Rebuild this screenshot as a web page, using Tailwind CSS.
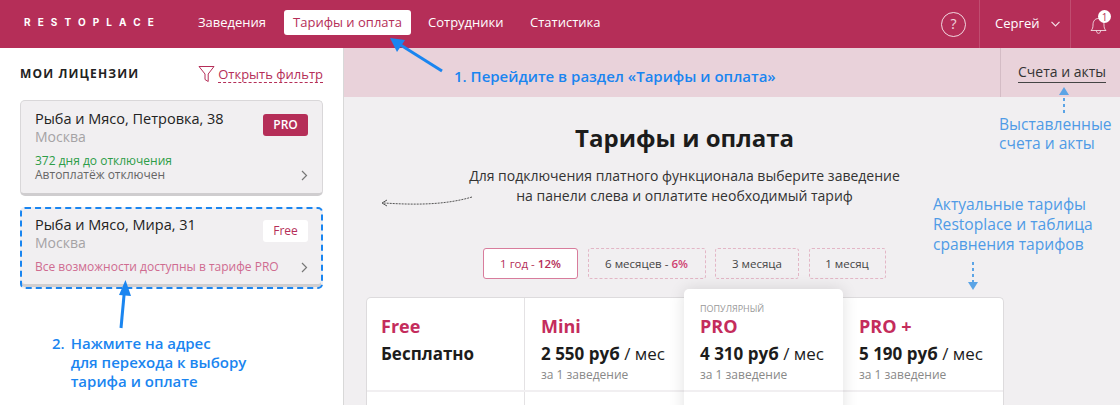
<!DOCTYPE html>
<html lang="ru">
<head>
    <meta charset="UTF-8" />
    <title>Тарифы и оплата - Restoplace</title>
    <script src="https://cdn.jsdelivr.net/npm/@tailwindcss/browser@4"></script>
</head>
<body class="relative h-[405px] w-[1120px] overflow-hidden bg-white font-['Open_Sans',sans-serif] text-[#222]">

<!-- Header -->
<header class="flex h-12 items-stretch bg-[#b52e58] text-white">
    <div class="flex w-[198px] items-center pb-[3px] pl-[24px] font-['Inter',sans-serif] text-[10px] font-bold tracking-[0.71em]">RESTOPLACE</div>
    <nav class="flex items-center text-[13px]">
        <a href="#" class="mb-[3px] flex h-[25px] w-[86px] items-center">Заведения</a>
        <a href="#" class="mb-[3px] flex h-[25px] w-[127px] items-center justify-center rounded-[3px] bg-white text-[#b52e58]">Тарифы и оплата</a>
        <a href="#" class="mb-[3px] ml-[17px] flex h-[25px] w-[102px] items-center">Сотрудники</a>
        <a href="#" class="mb-[3px] flex h-[25px] items-center">Статистика</a>
    </nav>
    <div class="ml-auto flex items-stretch">
        <div class="flex w-[75px] items-center justify-start pl-[37px]">
            <span class="flex h-[25px] w-[25px] items-center justify-center rounded-full border border-white/80 text-sm text-white/80">?</span>
        </div>
        <div class="flex w-[92px] items-center gap-[11px] border-x border-white/15 pl-[15px] text-[13px]">
            Сергей
            <svg width="9" height="6" viewBox="0 0 9 6" fill="none" stroke="#fff" stroke-opacity="0.85" stroke-width="1.2"><path d="M0.5 0.8 4.5 4.8 8.5 0.8" /></svg>
        </div>
        <div class="relative w-[49px]">
            <svg class="absolute left-[19px] top-[15px]" width="17" height="19" viewBox="0 0 17 19" fill="none" stroke="#fff" stroke-opacity="0.75" stroke-width="1"><path d="M1 15.5c1.5-1.4 2-3 2-5.500C3 6 5 3.500 8.500 3.500S14 6 14 10c0 2.500.5 4.100 2 5.500ZM6.500 15.800c0 3.400 4 3.400 4 0" /></svg>
            <span class="absolute left-[27px] top-[10px] flex h-[13px] w-[13px] items-center justify-center rounded-full bg-white text-[10px] leading-none text-[#b52e58]">1</span>
        </div>
    </div>
</header>

<div class="flex h-[357px]">
    <!-- Sidebar -->
    <aside class="w-[344px] shrink-0 border-r border-[#d8d8d8] px-[20px]">
        <div class="flex h-[52px] items-center justify-between">
            <h2 class="text-xs font-bold tracking-[0.095em] text-[#222]">МОИ ЛИЦЕНЗИИ</h2>
            <a href="#" class="flex items-center gap-[3px] text-[13px] text-[#b52e58]">
                <svg width="17" height="18" viewBox="0 0 17 18" fill="none" stroke="#b52e58" stroke-width="1"><path d="M1 1.500h15L10.200 9v7.500L7 14.500V9Z" /></svg>
                <span class="border-b border-dashed border-[#b52e58] leading-[16px]">Открыть фильтр</span>
            </a>
        </div>
        <div class="relative h-[96px] w-[303px] rounded-[5px] border border-[#d9d7d9] border-b-[3px] border-b-[#cfcdcf] bg-[#f1eff1] px-[14px] pt-[8px]">
            <div class="flex items-start justify-between">
                <div>
                    <p class="text-[14.500px] leading-[19px]">Рыба и Мясо, Петровка, 38</p>
                    <p class="text-sm leading-[17px] text-[#a5a3a5]">Москва</p>
                </div>
                <span class="mt-[5px] flex h-[22px] w-[45px] items-center justify-center rounded-[3px] bg-[#b52e58] text-xs font-semibold text-white">PRO</span>
            </div>
            <p class="mt-[9px] text-xs leading-[14px] text-[#2c9d48]">372 дня до отключения</p>
            <div class="flex items-center justify-between">
                <p class="text-xs leading-[14px] text-[#666]">Автоплатёж отключен</p>
                <svg width="7" height="11" viewBox="0 0 7 11" fill="none" stroke="#777" stroke-width="1.200"><path d="M1 1l4.500 4.500L1 10" /></svg>
            </div>
        </div>
        <div class="relative mt-[11px] h-[82px] w-[303px] rounded-[5px] border-2 border-dashed border-[#1a85f0] bg-[#f1eff1] px-[13px] pt-[6px] shadow-[inset_0_-3px_0_#d0ced0]">
            <div class="flex items-start justify-between">
                <div>
                    <p class="text-[14.500px] leading-[19px]">Рыба и Мясо, Мира, 31</p>
                    <p class="text-sm leading-[17px] text-[#a5a3a5]">Москва</p>
                </div>
                <span class="mt-[5px] flex h-[22px] w-[45px] items-center justify-center rounded-[3px] bg-white text-xs text-[#b52e58]">Free</span>
            </div>
            <div class="mt-[9px] flex items-center justify-between">
                <p class="text-xs leading-[14px] text-[#cf6b90]">Все возможности доступны в тарифе PRO</p>
                <svg width="7" height="11" viewBox="0 0 7 11" fill="none" stroke="#777" stroke-width="1.200"><path d="M1 1l4.500 4.500L1 10" /></svg>
            </div>
        </div>
    </aside>

    <!-- Main content -->
    <main class="min-w-0 flex-1 bg-[#f1eff1]">
        <div class="flex h-[49px] justify-end bg-[#e9d2da]">
            <div class="flex w-[120px] justify-start border-l border-[#d4bcc5] pl-[17px] pt-[15px]">
                <a href="#" class="h-[20px] border-b border-[#444] text-sm leading-[18px] text-[#333]">Счета и акты</a>
            </div>
        </div>
        <h1 class="pt-[25px] pr-[95px] text-center text-2xl font-bold leading-[32px] text-[#1c1c1c]">Тарифы и оплата</h1>
        <p class="mt-[12px] pr-[95px] text-center text-sm leading-[20px] text-[#333]">Для подключения платного функционала выберите заведение<br />на панели слева и оплатите необходимый тариф</p>
        <div class="mt-[42px] flex gap-[9.500px] pl-[139px] text-[11.500px]">
            <button class="h-[31px] w-[95px] rounded-[3px] border border-[#d87c9c] bg-white text-[#b52e58]">1 год - <b class="font-semibold">12%</b></button>
            <button class="h-[31px] w-[118px] rounded-[3px] border border-dashed border-[#e3b6c6] text-[#444]">6 месяцев - <b class="font-semibold text-[#cf3f70]">6%</b></button>
            <button class="h-[31px] w-[84px] rounded-[3px] border border-dashed border-[#e3b6c6] text-[#444]">3 месяца</button>
            <button class="h-[31px] w-[77px] rounded-[3px] border border-dashed border-[#e3b6c6] text-[#444]">1 месяц</button>
        </div>
        <div class="ml-[22px] mt-[18px] flex h-[122px] w-[638px] rounded-t-[5px] border border-b-0 border-[#dddbdd] bg-white">
            <div class="w-[158px] shrink-0 border-r border-[#e4e2e4]">
                <div class="-mr-px h-[94px] border-b-[2px] border-[#f1eff1] pl-[14px] pt-[16px]">
                    <p class="text-lg font-bold leading-[24px] text-[#c42c5c]">Free</p>
                    <p class="mt-[4px] text-[17px] font-bold leading-[24px] text-[#1c1c1c]">Бесплатно</p>
                </div>
            </div>
            <div class="w-[159px] shrink-0">
                <div class="h-[94px] border-b-[2px] border-[#f1eff1] pl-[16px] pt-[16px]">
                    <p class="text-lg font-bold leading-[24px] text-[#c42c5c]">Mini</p>
                    <p class="mt-[4px] text-[17px] leading-[24px] text-[#1c1c1c]"><b class="font-bold">2 550 руб</b> / мес</p>
                    <p class="mt-[1px] text-xs leading-[15px] text-[#888]">за 1 заведение</p>
                </div>
            </div>
            <div class="relative z-10 -mt-[9px] h-[132px] w-[159px] shrink-0 rounded-t-[5px] bg-white shadow-[0_0_16px_rgba(0,0,0,0.12)]">
                <div class="h-[103px] border-b-[2px] border-[#f1eff1] pl-[16px] pt-[14px]">
                    <p class="text-[9px] leading-[11px] text-[#999]">ПОПУЛЯРНЫЙ</p>
                    <p class="text-lg font-bold leading-[24px] text-[#c42c5c]">PRO</p>
                    <p class="mt-[4px] text-[17px] leading-[24px] text-[#1c1c1c]"><b class="font-bold">4 310 руб</b> / мес</p>
                    <p class="mt-[1px] text-xs leading-[15px] text-[#888]">за 1 заведение</p>
                </div>
            </div>
            <div class="min-w-0 flex-1">
                <div class="h-[94px] border-b-[2px] border-[#f1eff1] pl-[16px] pt-[16px]">
                    <p class="text-lg font-bold leading-[24px] text-[#c42c5c]">PRO +</p>
                    <p class="mt-[4px] text-[17px] leading-[24px] text-[#1c1c1c]"><b class="font-bold">5 190 руб</b> / мес</p>
                    <p class="mt-[1px] text-xs leading-[15px] text-[#888]">за 1 заведение</p>
                </div>
            </div>
        </div>
    </main>
</div>

<!-- Annotations lying over the screenshot -->
<svg class="absolute left-0 top-0 z-20" width="1120" height="405" fill="none">
    <path d="M442 71 399 44" stroke="#1a85f0" stroke-width="3" />
    <path d="M390 38 405 40 397 52Z" fill="#1a85f0" />
    <path d="M121 328 124.500 290" stroke="#1a85f0" stroke-width="3" />
    <path d="M125.500 280 131 296 119 295Z" fill="#1a85f0" />
    <path d="M1064 113V95" stroke="#5ba4e6" stroke-width="2" stroke-dasharray="3 3" />
    <path d="M1064 87 1069 95H1059Z" fill="#5ba4e6" />
    <path d="M973 262V282" stroke="#5ba4e6" stroke-width="2" stroke-dasharray="3 3" />
    <path d="M973 290 978 282H968Z" fill="#5ba4e6" />
    <path d="M472 197C445 205 415 205 384 203" stroke="#555" stroke-width="1" stroke-dasharray="2 1" />
    <path d="M387 200 382 203 387 206" stroke="#555" stroke-width="1" />
</svg>
<p class="absolute left-[454px] top-[66px] z-20 text-[15px] font-semibold leading-[20px] text-[#1a85f0]">1. Перейдите в раздел «Тарифы и оплата»</p>
<div class="absolute left-[52px] top-[334px] z-20 flex gap-[6px] text-[15px] font-semibold leading-[19px] text-[#1a85f0]">
    <span>2.</span>
    <p>Нажмите на адрес<br />для перехода к выбору<br />тарифа и оплате</p>
</div>
<p class="absolute left-[999px] top-[115px] z-20 text-[15.600px] leading-[19px] text-[#4f9be6]">Выставленные<br />счета и акты</p>
<p class="absolute left-[933px] top-[194px] z-20 text-[15.600px] leading-[20px] text-[#4f9be6]">Актуальные тарифы<br />Restoplace и таблица<br />сравнения тарифов</p>

</body>
</html>
